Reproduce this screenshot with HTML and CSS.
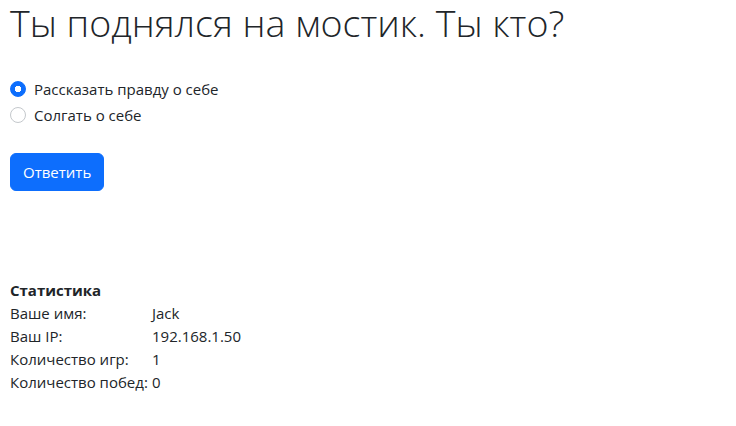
FILE: index.html
```html
<!DOCTYPE html>
<html lang="ru">
<head>
<meta charset="utf-8">
<link rel="stylesheet" href="styles.css">
</head>
<body>
<main class="page">
  <h1 class="title">Ты поднялся на мостик. Ты кто?</h1>
  <form class="quiz">
    <label class="check">
      <input type="radio" name="answer" class="radio" checked>
      <span>Рассказать правду о себе</span>
    </label>
    <label class="check">
      <input type="radio" name="answer" class="radio">
      <span>Солгать о себе</span>
    </label>
    <button type="button" class="btn">Ответить</button>
  </form>
  <section class="stats">
    <div class="stats-title">Статистика</div>
    <table class="stats-table">
      <tr><td class="label">Ваше имя:</td><td>Jack</td></tr>
      <tr><td class="label">Ваш IP:</td><td>192.168.1.50</td></tr>
      <tr><td class="label">Количество игр:</td><td>1</td></tr>
      <tr><td class="label">Количество побед:</td><td>0</td></tr>
    </table>
  </section>
</main>
</body>
</html>
```
FILE: styles.css
```css
* { box-sizing: border-box; }
html, body { margin: 0; padding: 0; background: #fff; }
body {
  font-family: "Open Sans", "Noto Sans", sans-serif;
  font-size: 15px;
  line-height: 24px;
  color: #212529;
}
.page {
  padding: 0 10px;
}
.title {
  margin: 0 0 32px;
  font-size: 37.6px;
  font-weight: 300;
  line-height: 45px;
}
.quiz {
  display: flex;
  flex-direction: column;
  align-items: flex-start;
}
.check {
  display: flex;
  align-items: center;
  gap: 8px;
  min-height: 24px;
  margin-bottom: 2px;
}
.radio {
  appearance: none;
  -webkit-appearance: none;
  margin: 0;
  width: 16px;
  height: 16px;
  border-radius: 50%;
  border: 1px solid #c4c8cc;
  background: #fff;
}
.radio:checked {
  border-color: #0d6efd;
  background: radial-gradient(circle, #fff 0 3px, #0d6efd 3.5px);
}
.btn {
  margin-top: 24px;
  font: inherit;
  color: #fff;
  background: #0d6efd;
  border: 1px solid #0d6efd;
  border-radius: 6px;
  padding: 6px 12px;
  line-height: 24px;
}
.stats {
  margin-top: 88px;
}
.stats-title {
  font-weight: 700;
  line-height: 23px;
}
.stats-table {
  border-collapse: collapse;
}
.stats-table td {
  padding: 0;
  line-height: 23px;
  white-space: nowrap;
}
.stats-table .label {
  width: 142px;
}
```
